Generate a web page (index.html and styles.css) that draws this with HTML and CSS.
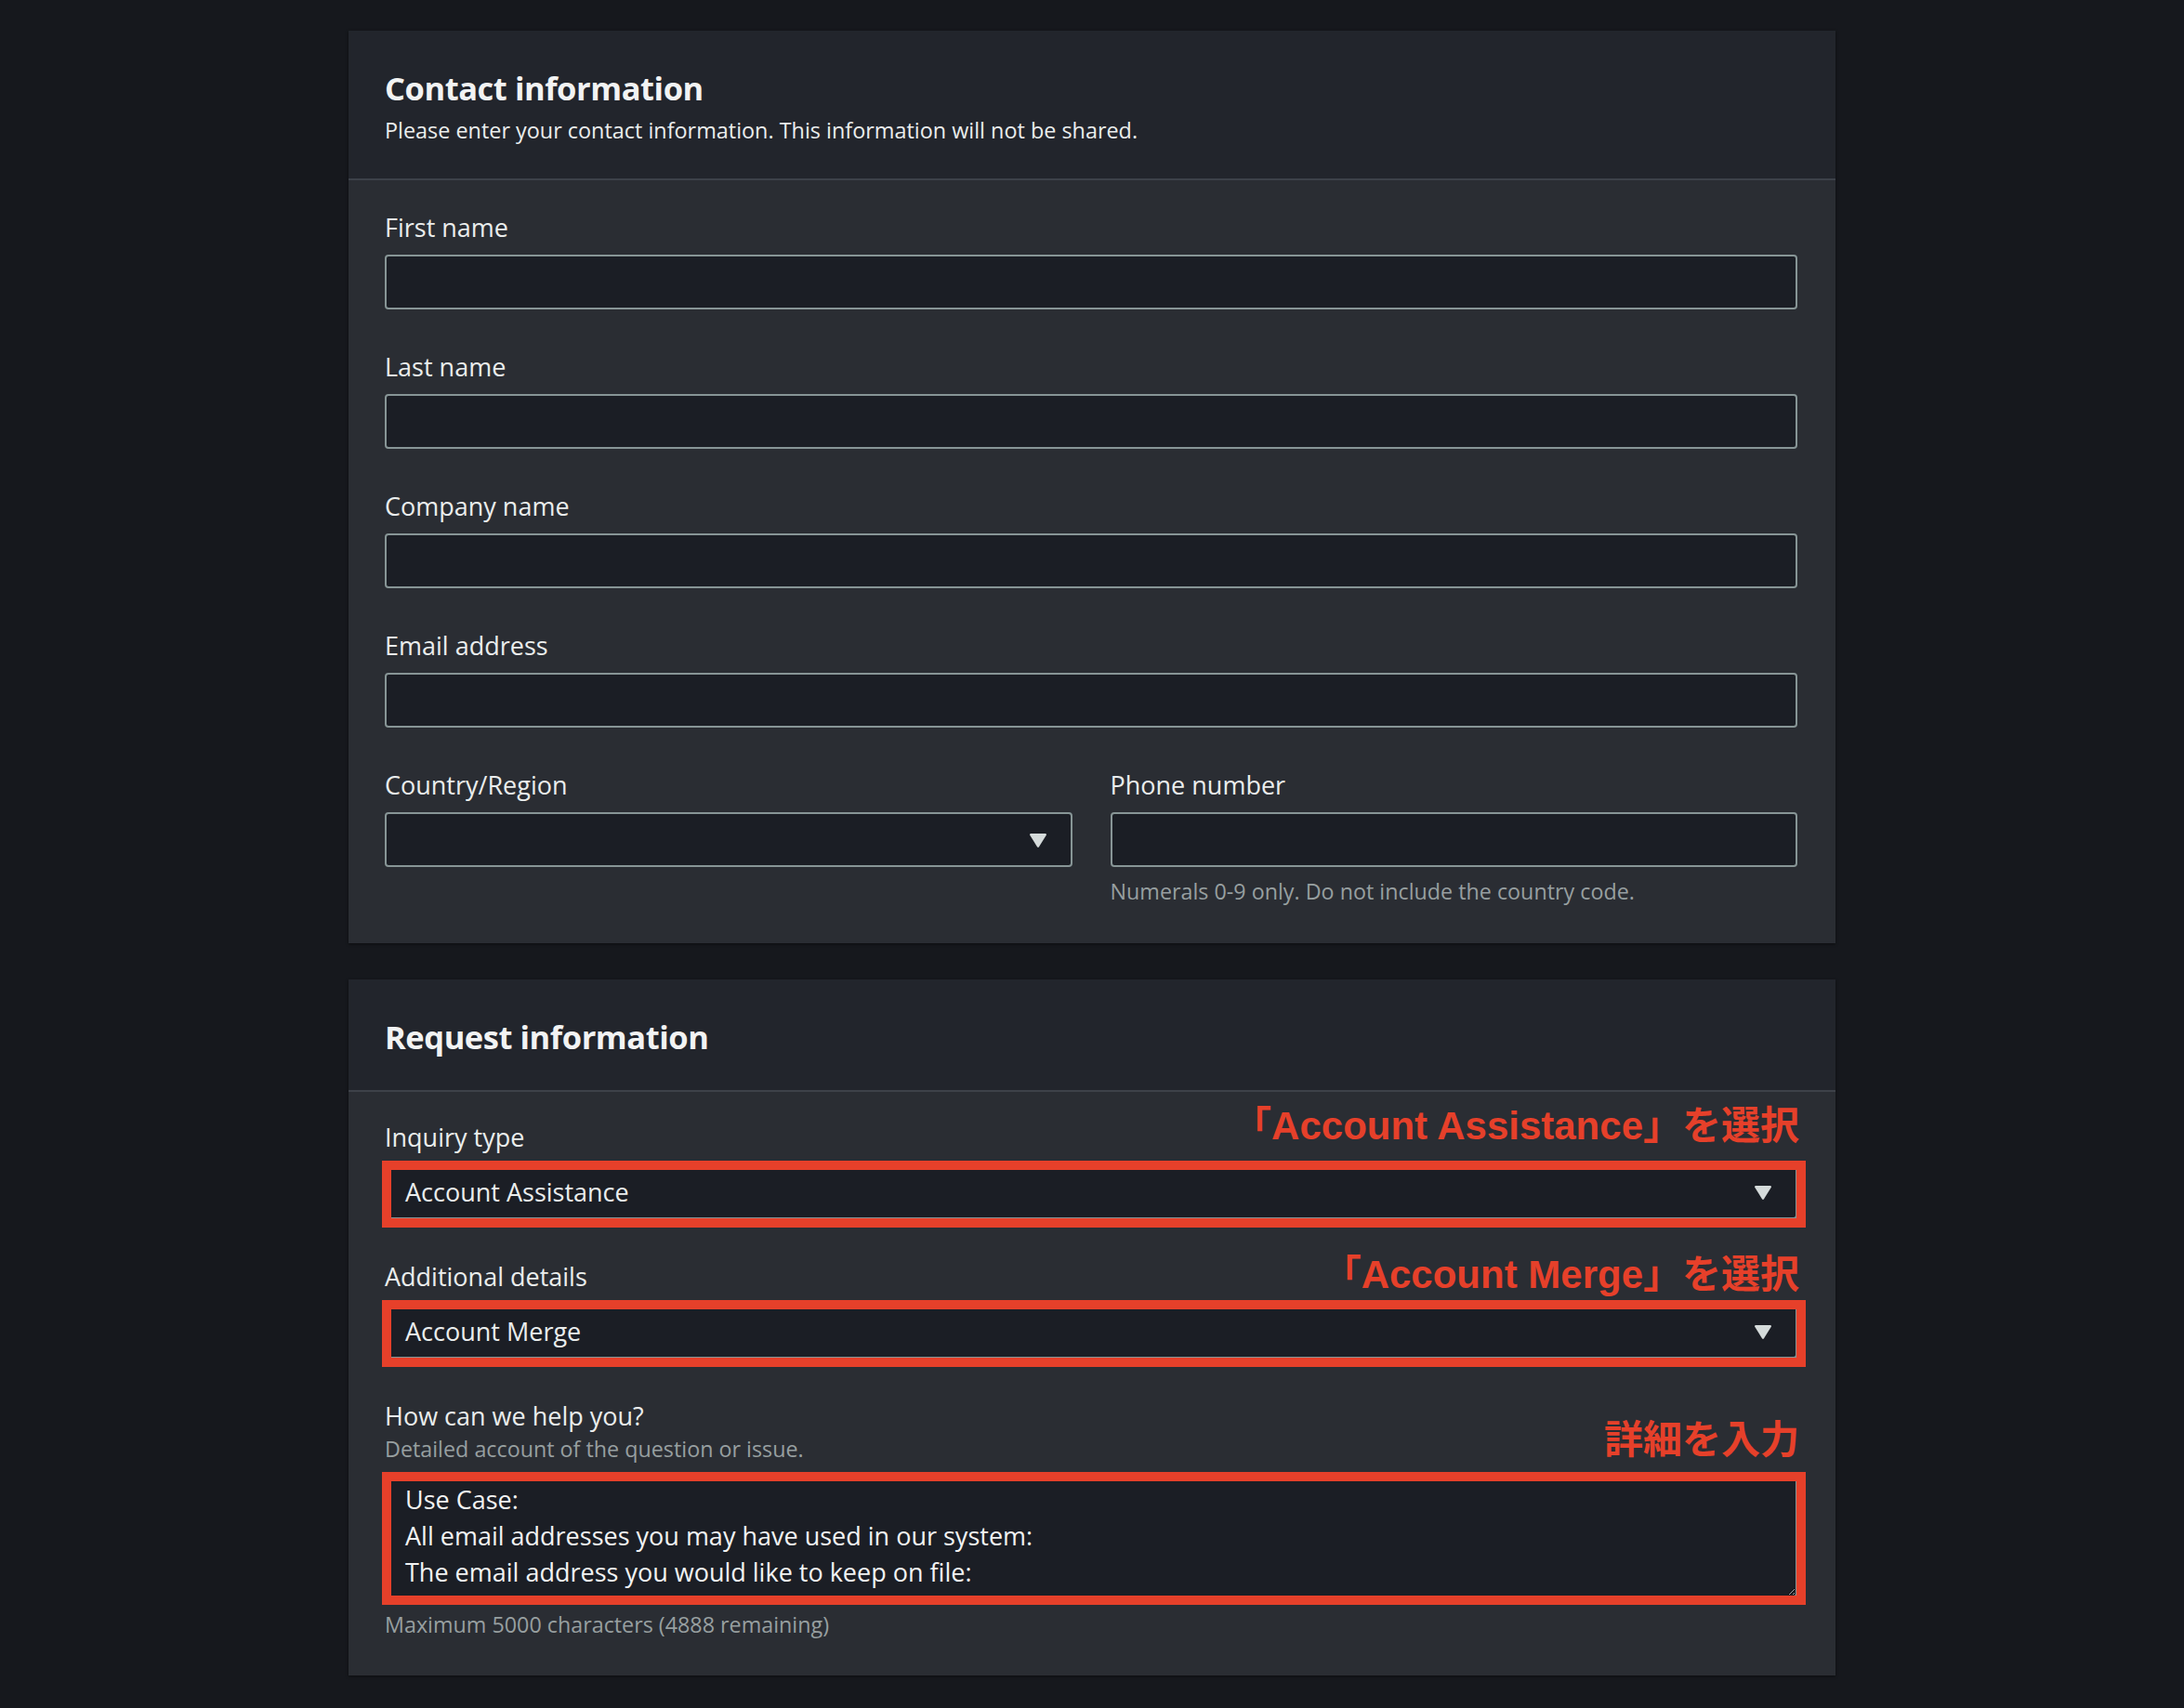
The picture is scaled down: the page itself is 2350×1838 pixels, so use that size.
FILE: index.html
```html
<!DOCTYPE html>
<html lang="en">
<head>
<meta charset="utf-8">
<title>Contact form</title>
<link rel="stylesheet" href="styles.css">
</head>
<body>
<main class="page">
  <section class="panel">
    <header class="panel-head">
      <h2 class="panel-title">Contact information</h2>
      <p class="panel-desc">Please enter your contact information. This information will not be shared.</p>
    </header>
    <div class="panel-body">
      <div class="field">
        <label class="label">First name</label>
        <input class="input" type="text">
      </div>
      <div class="field">
        <label class="label">Last name</label>
        <input class="input" type="text">
      </div>
      <div class="field">
        <label class="label">Company name</label>
        <input class="input" type="text">
      </div>
      <div class="field">
        <label class="label">Email address</label>
        <input class="input" type="text">
      </div>
      <div class="row">
        <div class="field">
          <label class="label">Country/Region</label>
          <div class="select">
            <span class="select-value"></span>
            <svg class="caret" width="20" height="16" viewBox="0 0 20 16"><path d="M2.2 1h15.6a1.2 1.2 0 0 1 1 1.8l-7.8 12.4a1.2 1.2 0 0 1-2 0L1.2 2.8A1.2 1.2 0 0 1 2.2 1z" fill="#d5dbdb"/></svg>
          </div>
        </div>
        <div class="field">
          <label class="label">Phone number</label>
          <input class="input" type="text">
          <p class="hint">Numerals 0-9 only. Do not include the country code.</p>
        </div>
      </div>
    </div>
  </section>

  <section class="panel">
    <header class="panel-head panel-head-plain">
      <h2 class="panel-title">Request information</h2>
    </header>
    <div class="panel-body panel-body-last">
      <div class="field">
        <label class="label">Inquiry type</label>
        <p class="note note-1">「Account Assistance」を選択</p>
        <div class="mark">
          <div class="select">
            <span class="select-value">Account Assistance</span>
            <svg class="caret" width="20" height="16" viewBox="0 0 20 16"><path d="M2.2 1h15.6a1.2 1.2 0 0 1 1 1.8l-7.8 12.4a1.2 1.2 0 0 1-2 0L1.2 2.8A1.2 1.2 0 0 1 2.2 1z" fill="#d5dbdb"/></svg>
          </div>
          <span class="frame"></span>
        </div>
      </div>
      <div class="field">
        <label class="label">Additional details</label>
        <p class="note note-2">「Account Merge」を選択</p>
        <div class="mark">
          <div class="select">
            <span class="select-value">Account Merge</span>
            <svg class="caret" width="20" height="16" viewBox="0 0 20 16"><path d="M2.2 1h15.6a1.2 1.2 0 0 1 1 1.8l-7.8 12.4a1.2 1.2 0 0 1-2 0L1.2 2.8A1.2 1.2 0 0 1 2.2 1z" fill="#d5dbdb"/></svg>
          </div>
          <span class="frame"></span>
        </div>
      </div>
      <div class="field">
        <label class="label label-tight">How can we help you?</label>
        <p class="hint hint-desc">Detailed account of the question or issue.</p>
        <p class="note note-3">詳細を入力</p>
        <div class="mark">
          <textarea class="textarea" readonly>Use Case:
All email addresses you may have used in our system:
The email address you would like to keep on file:</textarea>
          <span class="frame frame-area"></span>
        </div>
        <p class="hint hint-count">Maximum 5000 characters (4888 remaining)</p>
      </div>
    </div>
  </section>
</main>
</body>
</html>
```

FILE: styles.css
```css
html, body {
  margin: 0;
  background: #16181d;
}

body {
  font-family: "Open Sans", "Noto Sans", sans-serif;
  color: #eaeded;
}

.page {
  width: 1600px;
  margin: 0 auto;
  padding: 33px 0 35px;
  display: flex;
  flex-direction: column;
  gap: 39px;
}

.panel {
  background: #2a2d33;
  box-shadow: 0 1px 3px rgba(0, 0, 0, 0.5);
}

.panel-head {
  background: #22252c;
  padding: 40px 41px 36px 39px;
  border-bottom: 2px solid #3d4149;
}

.panel-head-plain {
  padding-bottom: 35px;
}

.panel-title {
  margin: 0;
  font-size: 34.5px;
  line-height: 44px;
  font-weight: 700;
  letter-spacing: -0.45px;
  color: #f2f3f3;
}

.panel-desc {
  margin: 7px 0 0;
  font-size: 23.4px;
  line-height: 32px;
  color: #eaeded;
}

.panel-body {
  padding: 33px 41px 40px 39px;
  display: flex;
  flex-direction: column;
  gap: 44px;
}

.panel-body-last {
  padding-top: 31px;
  padding-bottom: 39px;
}

.row {
  display: grid;
  grid-template-columns: 1fr 1fr;
  gap: 41px;
}

.field {
  position: relative;
  display: flex;
  flex-direction: column;
}

.label {
  display: block;
  font-size: 27px;
  line-height: 36px;
  margin-bottom: 11px;
  color: #eaeded;
}

.label-tight {
  margin-bottom: 1px;
}

.input,
.select {
  box-sizing: border-box;
  width: 100%;
  height: 59px;
  margin: 0;
  background: #1b1e25;
  border: 2px solid #879596;
  border-radius: 4px;
}

.input {
  display: block;
  outline: none;
}

.select {
  display: flex;
  align-items: center;
  justify-content: space-between;
  padding: 0 25px 0 20px;
  font-size: 27px;
  line-height: 36px;
  color: #eaeded;
}

.caret {
  display: block;
  flex: none;
}

.hint {
  margin: 10px 0 0;
  font-size: 23.3px;
  line-height: 32px;
  color: #979fa0;
}

.hint-desc {
  margin: 0 0 12px;
}

.hint-count {
  margin-top: 13px;
}

.textarea {
  display: block;
  box-sizing: border-box;
  width: 100%;
  height: 132px;
  margin: 0;
  padding: 5px 20px;
  background: #1b1e25;
  border: 2px solid #879596;
  border-radius: 4px;
  color: #f2f3f3;
  font-family: "Open Sans", sans-serif;
  font-size: 27px;
  line-height: 39px;
  resize: vertical;
  outline: none;
  overflow: hidden;
}

.mark {
  position: relative;
}

.frame {
  position: absolute;
  left: -3px;
  right: -9px;
  top: -4px;
  bottom: -9px;
  border: 10px solid #e6402a;
  pointer-events: none;
}

.frame-area {
  top: -3px;
  bottom: -8px;
}

.note {
  position: absolute;
  right: -2px;
  margin: 0;
  font-family: "Liberation Sans", "Noto Sans CJK JP", sans-serif;
  font-weight: 700;
  font-size: 42px;
  line-height: 41px;
  color: #e6402a;
  white-space: nowrap;
}

.note-1 {
  top: -15px;
}

.note-2 {
  top: -5px;
}

.note-3 {
  top: 23px;
}
```
